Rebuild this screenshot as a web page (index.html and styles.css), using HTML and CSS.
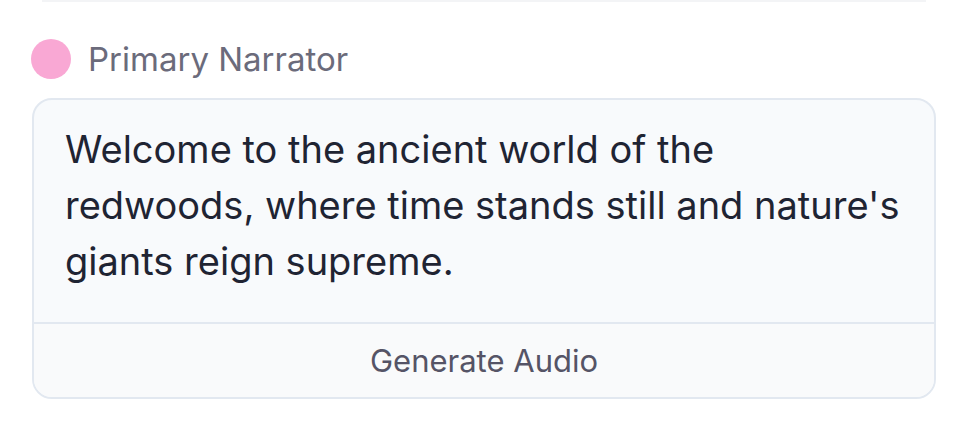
FILE: index.html
```html
<!DOCTYPE html>
<html lang="en">
<head>
<meta charset="utf-8">
<title>Narration</title>
<link rel="stylesheet" href="styles.css">
</head>
<body>
  <div class="top-rule"></div>
  <section class="segment">
    <div class="speaker">
      <span class="dot"></span>
      <span class="name">Primary Narrator</span>
    </div>
    <div class="card">
      <p class="script-text">Welcome to the ancient world of the redwoods, where time stands still and nature's giants reign supreme.</p>
      <button class="action" type="button">Generate Audio</button>
    </div>
  </section>
</body>
</html>
```

FILE: styles.css
```css
* { box-sizing: border-box; }

html, body {
  margin: 0;
  background: #ffffff;
  font-family: "Inter", "Noto Sans", sans-serif;
}

.top-rule {
  height: 2px;
  margin: 0 42px;
  background: #f3f4f6;
}

.segment {
  padding: 37px 32px 0;
}

.speaker {
  display: flex;
  align-items: center;
  gap: 17px;
  height: 40px;
  margin-left: -1px;
}

.dot {
  width: 40px;
  height: 40px;
  border-radius: 50%;
  background: #f9a8d4;
  flex: none;
}

.name {
  font-size: 33px;
  color: #6b6b7b;
}

.card {
  margin-top: 19px;
  width: 904px;
  border: 2px solid #e2e8f0;
  border-radius: 20px;
  background: #f8fafc;
  overflow: hidden;
  display: flex;
  flex-direction: column;
}

.script-text {
  margin: 0;
  padding: 21px 28px 33px 31px;
  font-size: 38px;
  line-height: 56px;
  color: #1f2433;
}

.action {
  height: 75px;
  border: 0;
  border-top: 2px solid #e2e8f0;
  background: #f9fafb;
  font-family: inherit;
  font-size: 31px;
  color: #555466;
  padding: 0;
  cursor: pointer;
}
```
